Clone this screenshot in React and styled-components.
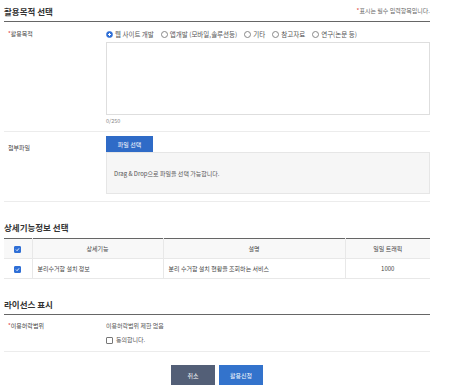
import styled, { createGlobalStyle } from "styled-components";

const Global = createGlobalStyle`
  body {
    margin: 0;
    background: #fff;
    font-family: "Noto Sans CJK KR", "Noto Sans", sans-serif;
    color: #444;
  }
`;

const Page = styled.div`
  width: 426px;
  padding: 0 0 0 4px;
`;

const SectionHead = styled.div`
  display: flex;
  justify-content: space-between;
  align-items: center;
  height: ${(p) => p.h || 20}px;
  border-bottom: ${(p) => (p.line ? "1px solid #666" : "none")};
`;

const Title = styled.h2`
  margin: 0;
  font-size: 8.5px;
  line-height: 10px;
  font-weight: 700;
  color: #333;
`;

const Note = styled.span`
  font-size: 6px;
  color: #666;
`;

const Star = styled.span`
  color: #e03b3b;
`;

const Row = styled.div`
  display: grid;
  grid-template-columns: 102px 1fr;
  border-bottom: 1px solid #ececec;
  padding: ${(p) => p.pad || "7px 0 8px"};
`;

const Label = styled.div`
  font-size: 6px;
  line-height: 8px;
  color: #444;
  padding-left: 4px;
  padding-top: ${(p) => p.top || 0}px;
`;

const Radios = styled.div`
  display: flex;
  align-items: center;
  gap: 7px;
  height: 12px;
  font-size: 6.5px;
  color: #555;
`;

const RadioItem = styled.label`
  display: flex;
  align-items: center;
  gap: 2px;
`;

const Dot = styled.span`
  width: 5px;
  height: 5px;
  border-radius: 50%;
  border: 1px solid ${(p) => (p.on ? "#2f6fd6" : "#888")};
  background: ${(p) => (p.on ? "radial-gradient(circle, #fff 0 1px, #2f6fd6 1.2px)" : "#fff")};
`;

const Area = styled.div`
  height: 71px;
  margin-top: 2px;
  border: 1px solid #dedede;
`;

const Counter = styled.div`
  font-size: 5.5px;
  color: #888;
  margin-top: 2px;
`;

const FileBtn = styled.div`
  width: 47px;
  height: 16px;
  display: flex;
  align-items: center;
  justify-content: center;
  background: #2f6bc7;
  color: #fff;
  font-size: 6px;
`;

const Drop = styled.div`
  height: 40px;
  display: flex;
  align-items: center;
  padding-left: 7px;
  background: #f6f6f6;
  border: 1px solid #e6e6e6;
  font-size: 6px;
  color: #555;
`;

const Table = styled.table`
  width: 100%;
  border-collapse: collapse;
  font-size: 6px;
  color: #444;
  border-top: 1px solid #666;
  td, th {
    height: 19px;
    padding: 0;
    border-bottom: 1px solid #e8e8e8;
    border-left: 1px solid #e8e8e8;
    font-weight: 400;
  }
  td:first-child, th:first-child {
    border-left: none;
  }
  th {
    background: #f8f8f8;
  }
`;

const Cell = styled.td`
  text-align: ${(p) => p.align || "left"};
  padding-left: ${(p) => p.pl || 0}px !important;
`;

const Check = styled.span`
  display: inline-flex;
  align-items: center;
  justify-content: center;
  width: 5px;
  height: 5px;
  border-radius: 1px;
  background: ${(p) => (p.on ? "#2f6fd6" : "#fff")};
  border: 1px solid ${(p) => (p.on ? "#2f6fd6" : "#777")};
  vertical-align: middle;
`;

const Gap = styled.div`
  height: ${(p) => p.h}px;
`;

const LicText = styled.div`
  font-size: 6px;
  line-height: 8px;
  color: #555;
  display: flex;
  flex-direction: column;
  gap: 6px;
`;

const Agree = styled.label`
  display: flex;
  align-items: center;
  gap: 3px;
`;

const Buttons = styled.div`
  display: flex;
  justify-content: center;
  gap: 4px;
  margin-top: 13px;
`;

const Btn = styled.div`
  width: 44px;
  height: 20px;
  display: flex;
  align-items: center;
  justify-content: center;
  background: ${(p) => (p.primary ? "#3373cc" : "#535f77")};
  color: #fff;
  font-size: 6px;
`;

const Tick = () => (
  <svg width="5" height="5" viewBox="0 0 10 10">
    <path d="M2 5.2 L4.2 7.4 L8 2.8" stroke="#fff" strokeWidth="1.8" fill="none" />
  </svg>
);

const purposes = ["웹 사이트 개발", "앱개발 (모바일,솔루션등)", "기타", "참고자료", "연구(논문 등)"];

export default function App() {
  return (
    <Page>
      <Global />
      <SectionHead h={21} line>
        <Title>활용목적 선택</Title>
        <Note>
          <Star>*</Star>표시는 필수 입력항목입니다.
        </Note>
      </SectionHead>
      <Row pad="6px 0 6px">
        <Label top={2}>
          <Star>*</Star>활용목적
        </Label>
        <div>
          <Radios>
            {purposes.map((p, i) => (
              <RadioItem key={p}>
                <Dot on={i === 0} />
                {p}
              </RadioItem>
            ))}
          </Radios>
          <Area />
          <Counter>0/250</Counter>
        </div>
      </Row>
      <Row pad="4px 0 7px">
        <Label top={8}>첨부파일</Label>
        <div>
          <FileBtn>파일 선택</FileBtn>
          <Drop>Drag &amp; Drop으로 파일을 선택 가능합니다.</Drop>
        </div>
      </Row>
      <Gap h={14} />
      <SectionHead h={22}>
        <Title>상세기능정보 선택</Title>
      </SectionHead>
      <Table>
        <colgroup>
          <col style={{ width: 28 }} />
          <col style={{ width: 131 }} />
          <col style={{ width: 182 }} />
          <col />
        </colgroup>
        <thead>
          <tr>
            <th>
              <Check on>
                <Tick />
              </Check>
            </th>
            <th>상세기능</th>
            <th>설명</th>
            <th>일일 트래픽</th>
          </tr>
        </thead>
        <tbody>
          <tr>
            <Cell align="center">
              <Check on>
                <Tick />
              </Check>
            </Cell>
            <Cell pl={5}>분리수거함 설치 정보</Cell>
            <Cell pl={5}>분리 수거함 설치 현황을 조회하는 서비스</Cell>
            <Cell align="center">1000</Cell>
          </tr>
        </tbody>
      </Table>
      <Gap h={14} />
      <SectionHead h={21} line>
        <Title>라이선스 표시</Title>
      </SectionHead>
      <Row pad="7px 0 7px">
        <Label>
          <Star>*</Star>이용허락범위
        </Label>
        <LicText>
          <span>이용허락범위 제한 없음</span>
          <Agree>
            <Check />
            동의합니다.
          </Agree>
        </LicText>
      </Row>
      <Buttons>
        <Btn>취소</Btn>
        <Btn primary>활용신청</Btn>
      </Buttons>
    </Page>
  );
}
